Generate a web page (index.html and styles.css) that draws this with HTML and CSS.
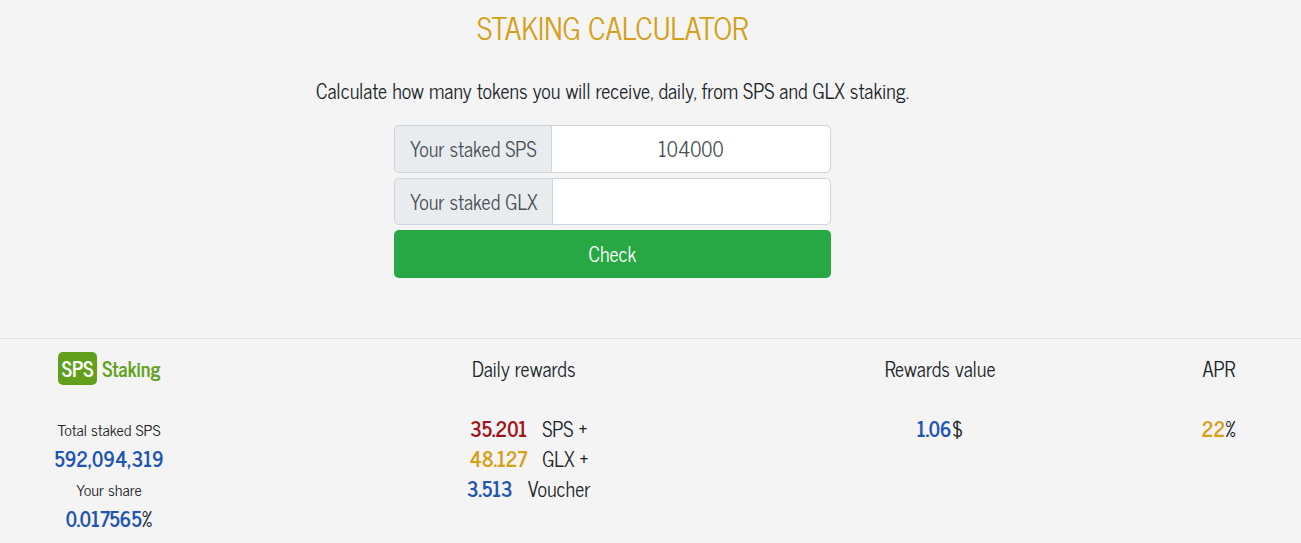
FILE: index.html
```
<!DOCTYPE html>
<html lang="en">
<head>
  <meta charset="UTF-8">
  <meta name="viewport" content="width=device-width, initial-scale=1.0">
  <title>Staking calculator</title>
  <link rel="stylesheet" href="styles.css">
</head>
<body>
  <div class="calculator">
    <h1>STAKING CALCULATOR</h1>
    <p class="intro">Calculate how many tokens you will receive, daily, from SPS and GLX staking.</p>
    <form class="stake-form">
      <div class="input-group">
        <label for="sps">Your staked SPS</label>
        <input type="text" id="sps" name="sps" value="104000">
      </div>
      <div class="input-group">
        <label for="glx">Your staked GLX</label>
        <input type="text" id="glx" name="glx">
      </div>
      <button type="submit" class="btn-check">Check</button>
    </form>
  </div>
  <table class="results">
    <thead>
      <tr>
        <th class="col-token"><span class="badge">SPS</span> <span class="token">Staking</span></th>
        <th class="col-rewards">Daily rewards</th>
        <th class="col-value">Rewards value</th>
        <th class="col-apr">APR</th>
      </tr>
    </thead>
    <tbody>
      <tr>
        <td>
          <div class="small">Total staked SPS</div>
          <div><b class="blue">592,094,319</b></div>
          <div class="small">Your share</div>
          <div><b class="blue">0.017565</b>%</div>
        </td>
        <td class="rewards">
          <div><b class="red">35.201</b> SPS +</div>
          <div><b class="gold">48.127</b> GLX +</div>
          <div><b class="blue">3.513</b> Voucher</div>
        </td>
        <td><b class="blue">1.06</b>$</td>
        <td class="col-apr"><b class="gold">22</b>%</td>
      </tr>
    </tbody>
  </table>
</body>
</html>
```
FILE: styles.css
```
* {
  box-sizing: border-box;
}
body {
  margin: 0;
  font-family: "News Cycle", "Roboto Condensed", Roboto, sans-serif;
  font-size: 20px;
  font-weight: 400;
  line-height: 30px;
  color: #212529;
  background-color: #f4f4f4;
  text-align: center;
}
.calculator {
  padding: 9px 76px 60px 0;
}
h1 {
  margin: 0 0 31px;
  font-size: 30px;
  font-weight: 400;
  line-height: 36px;
  color: #d4a017;
}
.intro {
  margin: 0 0 19px;
}
.stake-form {
  display: flex;
  flex-direction: column;
  gap: 5px;
  width: 437px;
  max-width: 100%;
  margin: 0 auto;
}
.input-group {
  display: flex;
  height: 48px;
}
.input-group + .input-group {
  height: 47px;
}
.input-group label {
  padding: 8px 14px 8px 15px;
  color: #495057;
  background-color: #e9ecef;
  border: 1px solid #ced4da;
  border-right: 0;
  border-radius: 5px 0 0 5px;
}
.input-group input {
  flex: 1;
  min-width: 0;
  padding: 8px 12px;
  font: inherit;
  color: #495057;
  text-align: center;
  background-color: #fff;
  border: 1px solid #ced4da;
  border-radius: 0 5px 5px 0;
}
.btn-check {
  height: 48px;
  font: inherit;
  color: #fff;
  background-color: #28a745;
  border: 0;
  border-radius: 5px;
}
.results {
  width: 100%;
  table-layout: fixed;
  border-collapse: collapse;
  border-top: 1px solid #dee2e6;
}
th, td {
  padding: 15px 0;
  font-weight: 400;
  vertical-align: top;
}
.col-token {
  width: 218px;
}
.col-rewards {
  width: 47%;
}
.col-value {
  width: 17%;
}
.col-apr {
  padding-left: 86px;
}
.badge {
  display: inline-block;
  padding: 2px 4px 1px;
  margin: -2px 0;
  font-weight: 700;
  color: #fff;
  background-color: #62a01c;
  border-radius: 5px;
}
.token {
  font-weight: 700;
  color: #62a01c;
}
.rewards {
  padding-left: 10px;
}
.rewards b {
  margin-right: 10px;
}
b {
  font-weight: 700;
}
.small {
  font-size: 16px;
}
.blue {
  color: #1f55b0;
}
.red {
  color: #a01418;
}
.gold {
  color: #d4a017;
}
```
